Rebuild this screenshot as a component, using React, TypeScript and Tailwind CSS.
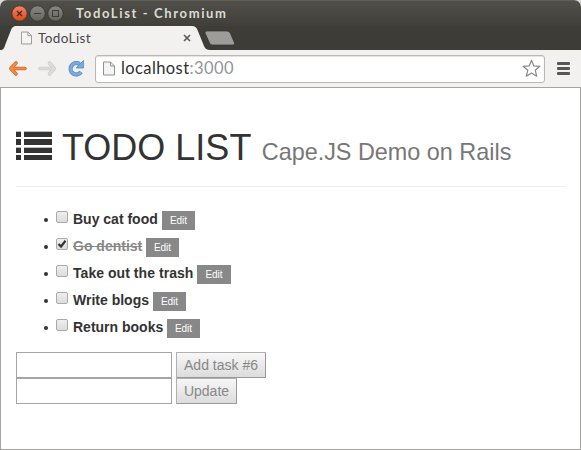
import React from "react";

const tasks = [
  { title: "Buy cat food", done: false, width: "w-[85px]", button: "w-[33px]" },
  { title: "Go dentist", done: true, width: "w-[69px]", button: "w-[33px]" },
  { title: "Take out the trash", done: false, width: "w-[120px] tracking-[0.05px]", button: "w-[34px]" },
  { title: "Write blogs", done: false, width: "w-[76px]", button: "w-[33px]" },
  { title: "Return books", done: false, width: "w-[90px]", button: "w-[33px]" },
];

function PageIcon({ className }: { className: string }) {
  return (
    <svg className={className} viewBox="0 0 12 14" fill="none">
      <path d="M.5 .5H7.5L11.5 4.5V13.5H.5Z" fill="#f4f4f4" stroke="#929292" />
      <path d="M7.5 .5V4.5H11.5" stroke="#929292" />
    </svg>
  );
}

function TitleBar() {
  return (
    <div className="flex h-[26px] items-center bg-gradient-to-b from-[#504f49] to-[#403f3a] border-t border-[#5f5e57] pl-[11px]">
      <svg className="h-[18px] w-[54px] shrink-0" viewBox="0 0 54 18">
        <defs>
          <linearGradient id="closeFill" x1="0" y1="0" x2="0" y2="1">
            <stop offset="0" stopColor="#f58462" />
            <stop offset="1" stopColor="#dd4814" />
          </linearGradient>
          <linearGradient id="buttonFill" x1="0" y1="0" x2="0" y2="1">
            <stop offset="0" stopColor="#8a8880" />
            <stop offset="1" stopColor="#66645d" />
          </linearGradient>
        </defs>
        <circle cx="8.5" cy="8.500" r="7.7" fill="url(#closeFill)" stroke="#33322e" strokeWidth=".8" />
        <circle cx="26.5" cy="8.500" r="7.7" fill="url(#buttonFill)" stroke="#33322e" strokeWidth=".8" />
        <circle cx="44.5" cy="8.500" r="7.7" fill="url(#buttonFill)" stroke="#33322e" strokeWidth=".8" />
        <path d="M6 6L11 11M11 6L6 11" stroke="#4d2417" strokeWidth="1.3" />
        <path d="M23 8.500H30" stroke="#3c3b37" strokeWidth="1" />
        <rect x="41.5" y="5.500" width="6" height="6" fill="none" stroke="#3c3b37" strokeWidth="1" />
      </svg>
      <span className="-mt-[2px] ml-[11px] whitespace-nowrap [font-family:Lato,sans-serif] text-[13px] font-bold leading-[18px] tracking-[1.63px] text-[#dfdbd2]">
        TodoList - Chromium
      </span>
    </div>
  );
}

function TabStrip() {
  return (
    <div className="relative flex h-[24px] bg-[#3d3c37]">
      <svg className="absolute left-0 top-0 h-[24px] w-[240px]" viewBox="0 0 240 24">
        <path d="M0 24C4 24 4 22 5.500 18L11 4Q12.500 0 16 0H192Q196 0 197.500 4L204 20Q205.500 24 210 24Z" fill="#f2f1f0" />
        <path d="M207 5H227Q229.500 5 230.500 7.500L234.500 17Q235 19 233 19H212.500Q210.500 19 209.500 17L205 7Q204.500 5 207 5Z" fill="#9d9c9a" stroke="#33322e" strokeWidth=".7" />
      </svg>
      <div className="relative flex w-[200px] items-center pl-[21px]">
        <PageIcon className="h-[14px] w-[11px]" />
        <span className="-mt-px ml-[6px] [font-family:Lato,sans-serif] text-[13.5px] leading-[18px] tracking-[0.4px] text-[#48484b]">TodoList</span>
        <svg className="ml-auto mr-[9px] h-[8px] w-[8px]" viewBox="0 0 8 8">
          <path d="M1 1L7 7M7 1L1 7" stroke="#5c5c5c" strokeWidth="1.7" />
        </svg>
      </div>
    </div>
  );
}

function Toolbar() {
  return (
    <div className="flex h-[38px] items-center border-b border-[#a4a4a4] bg-[#f2f1f0] pl-2">
      <svg className="h-[20px] w-[80px] shrink-0" viewBox="0 0 80 20">
        <g fill="none" strokeLinecap="round" strokeLinejoin="round">
          <path d="M8 4L2.800 9.500L8 15M3.500 9.500H17" stroke="#d5682f" strokeWidth="3.600" />
          <path d="M8 4L2.800 9.500L8 15M3.500 9.500H17" stroke="#ee8c48" strokeWidth="2" />
          <path d="M41.500 4L46.200 9.500L41.500 15M45.500 9.500H32" stroke="#cfcdca" strokeWidth="3.600" />
          <path d="M41.500 4L46.200 9.500L41.500 15M45.500 9.500H32" stroke="#dedcd9" strokeWidth="2" />
        </g>
        <path d="M71.500 5A5.700 5.700 0 1 0 73 13" fill="none" stroke="#5488c2" strokeWidth="4.200" />
        <path d="M75.500 1.500V9H68Z" fill="#77ade0" stroke="#5488c2" strokeWidth=".8" />
        <path d="M71.500 5A5.700 5.700 0 1 0 73 13" fill="none" stroke="#77ade0" strokeWidth="2.600" />
      </svg>
      <div className="ml-[7px] flex h-[28px] w-[450px] shrink-0 items-center rounded-[3px] border border-[#b9b8b6] bg-white pl-[7px] pr-[3px] shadow-[inset_0_1px_1px_#e2e2e2]">
        <PageIcon className="h-[15px] w-[12px]" />
        <span className="-mt-px ml-[6px] [font-family:Lato,sans-serif] text-[16.5px] leading-[20px] tracking-[0.4px] text-[#303030]">
          localhost<span className="text-[#929699]">:3000</span>
        </span>
        <svg className="ml-auto h-[19px] w-[19px]" viewBox="0 0 19 19">
          <path d="M9.500 1.300L11.800 6.900L17.900 7.300L13.200 11.200L14.700 17.200L9.500 13.900L4.300 17.200L5.800 11.200L1.100 7.300L7.200 6.900Z" fill="white" stroke="#888" strokeWidth="1.200" strokeLinejoin="round" />
        </svg>
      </div>
      <div className="ml-[12px] flex w-[13px] flex-col gap-[2px]">
        <i className="h-[3px] rounded-[1px] bg-[#555754]" />
        <i className="h-[3px] rounded-[1px] bg-[#555754]" />
        <i className="h-[3px] rounded-[1px] bg-[#555754]" />
      </div>
    </div>
  );
}

function Checkbox({ checked }: { checked: boolean }) {
  return (
    <span role="checkbox" aria-checked={checked} className="flex h-[12px] w-[12px] shrink-0 rounded-[2px] border border-[#aaa] bg-gradient-to-b from-[#eee] to-[#dcdcdc]">
      {checked && (
        <svg className="h-[10px] w-[10px]" viewBox="0 0 10 10" fill="none">
          <path d="M1.500 5L4 7.500L8.500 1.800" stroke="#333" strokeWidth="2.200" />
        </svg>
      )}
    </span>
  );
}

export default function App() {
  return (
    <div className="flex h-[450px] w-[581px] flex-col overflow-hidden bg-[#d9d9d9] font-['Liberation_Sans',Arial,sans-serif]">
      <div className="flex flex-1 flex-col overflow-hidden rounded-t-[7px] bg-white">
        <TitleBar />
        <TabStrip />
        <Toolbar />
        <main className="flex flex-1 flex-col border border-t-0 border-[#a7a5a2] px-[15px] text-[#333]">
          <header className="flex h-[99px] items-baseline border-b border-[#eee] pt-[40px] leading-[40px]">
            <svg className="h-[29px] w-[36px] shrink-0" viewBox="0 0 36 29" fill="#333">
              <path d="M0 1H5V6H0ZM8 1H36V6H8ZM0 8H5V14H0ZM8 8H36V14H8ZM0 17H5V22H0ZM8 17H36V22H8ZM0 24H5V29H0ZM8 24H36V29H8Z" />
              <path d="M0 0H5V1H0ZM8 0H36V1H8ZM0 16H5V17H0ZM8 16H36V17H8Z" fill="#bbb" />
            </svg>
            <h1 className="ml-[10px] whitespace-nowrap text-[36px]">
              TODO LIST <small className="ml-px text-[23.4px] text-[#777]">Cape.JS Demo on Rails</small>
            </h1>
          </header>
          <ul className="mt-[24px] flex flex-col gap-2">
            {tasks.map((task) => (
              <li key={task.title} className="flex h-[19px] items-start pl-[28px]">
                <i className="mr-[8px] mt-[7px] h-[4px] w-[4px] shrink-0 rounded-full bg-[#333]" />
                <Checkbox checked={task.done} />
                <span className={`ml-[5px] mr-[4px] whitespace-nowrap text-[14px] font-bold leading-[17px] ${task.width} ${task.done ? "text-[#888] line-through" : ""}`}>{task.title}</span>
                <button className={`h-[19px] bg-[#888] text-center text-[10px] leading-[19px] text-white ${task.button}`}>Edit</button>
              </li>
            ))}
          </ul>
          <div className="mt-[14px] flex gap-1">
            <input aria-label="New task" className="h-[26px] w-[156px] border border-[#a5a5a5] bg-white" />
            <button className="h-[26px] w-[90px] rounded-[1px] border border-[#999] border-l-[#b0b0b0] border-t-[#b0b0b0] bg-gradient-to-b from-[#f7f7f7] to-[#dcdcdc] text-[14px] leading-[24px] text-[#888]">Add task #6</button>
          </div>
          <div className="flex gap-1">
            <input aria-label="Task title" className="h-[26px] w-[156px] border border-[#a5a5a5] bg-white" />
            <button className="h-[26px] w-[61px] rounded-[1px] border border-[#999] border-l-[#b0b0b0] border-t-[#b0b0b0] bg-gradient-to-b from-[#f7f7f7] to-[#dcdcdc] text-[14px] leading-[24px] text-[#888]">Update</button>
          </div>
        </main>
      </div>
    </div>
  );
}
